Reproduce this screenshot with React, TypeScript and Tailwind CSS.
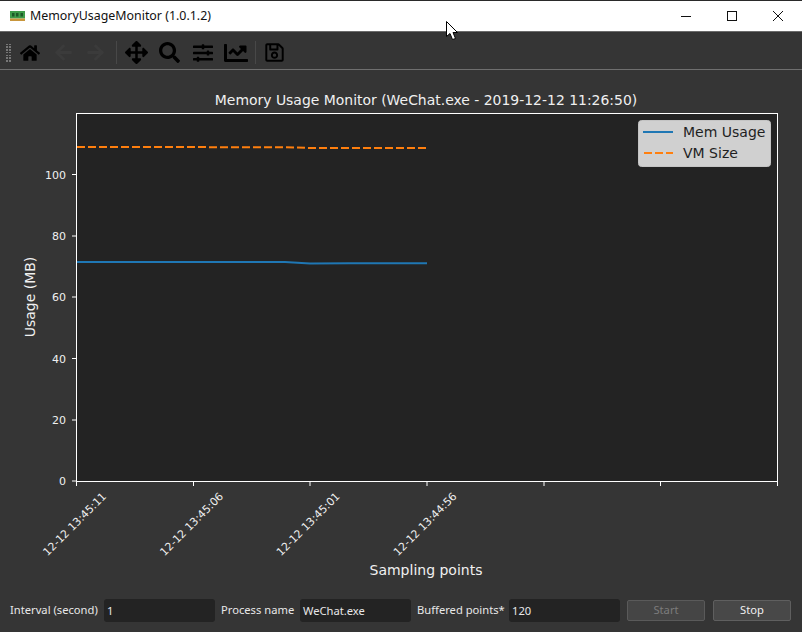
import React from 'react';
import { FaHome, FaArrowLeft, FaArrowRight, FaArrowsAlt, FaSearch, FaSlidersH, FaChartLine, FaRegSave } from 'react-icons/fa';

const yTicks = [
  { label: '0', y: 481 },
  { label: '20', y: 420 },
  { label: '40', y: 358.5 },
  { label: '60', y: 297 },
  { label: '80', y: 236 },
  { label: '100', y: 174.5 },
];

const xTicks = [
  { x: 76.5, label: '12-12 13:45:11' },
  { x: 193.5, label: '12-12 13:45:06' },
  { x: 310, label: '12-12 13:45:01' },
  { x: 427, label: '12-12 13:44:56' },
  { x: 544, label: '' },
  { x: 660.5, label: '' },
  { x: 777.5, label: '' },
];

const Chart = () => (
  <svg width="802" height="521" viewBox="0 70 802 521" className="block" style={{ fontFamily: '"DejaVu Sans", sans-serif' }}>
    <rect x="76.5" y="113.5" width="701" height="368" fill="#232323" stroke="#ffffff" strokeWidth="1" />
    {yTicks.map(t => (
      <g key={t.label}>
        <line x1="72" x2="76.5" y1={t.y} y2={t.y} stroke="#fff" />
        <text x="66" y={t.y + 4} textAnchor="end" fontSize="11" fill="#f0f0f0">{t.label}</text>
      </g>
    ))}
    {xTicks.map(t => (
      <g key={t.x}>
        <line x1={t.x} x2={t.x} y1="481" y2="486" stroke="#fff" />
        {t.label && (
          <text transform={`translate(${t.x + 30.5} 497) rotate(-45)`} textAnchor="end" fontSize="10.9" fill="#f0f0f0">{t.label}</text>
        )}
      </g>
    ))}
    <text x="426" y="105" textAnchor="middle" fontSize="13.95" fill="#f0f0f0">Memory Usage Monitor (WeChat.exe - 2019-12-12 11:26:50)</text>
    <text x="426" y="575" textAnchor="middle" fontSize="14" fill="#f0f0f0">Sampling points</text>
    <text transform="translate(35 297) rotate(-90)" textAnchor="middle" fontSize="14" fill="#f0f0f0">Usage (MB)</text>
    <polyline points="77,262 285,262 310,263.5 350,263.2 427,263.2" fill="none" stroke="#1f77b4" strokeWidth="2" />
    <polyline points="77,147 285,147.2 310,148 427,148" fill="none" stroke="#ff7f0e" strokeWidth="2" strokeDasharray="8 3" />
    <rect x="638.5" y="120.5" width="132" height="46" rx="3" fill="#d0d0d0" stroke="#c4c4c4" />
    <line x1="643" x2="673" y1="132" y2="132" stroke="#1f77b4" strokeWidth="2" />
    <line x1="644" x2="673" y1="153" y2="153" stroke="#ff7f0e" strokeWidth="2" strokeDasharray="8 3" />
    <text x="683" y="137" fontSize="14" fill="#1f1f1f">Mem Usage</text>
    <text x="683" y="158" fontSize="14" fill="#1f1f1f">VM Size</text>
  </svg>
);

const Field = ({ label, value, labelClass }: { label: string; value: string; labelClass: string }) => (
  <div className="flex items-center gap-[5px]">
    <span className={`text-[11.2px] text-[#e8e8e8] whitespace-nowrap ${labelClass}`}>{label}</span>
    <div className="w-[111px] h-[23px] rounded-[3px] bg-[#232323] pl-[3px] text-[11.2px] leading-[23px] text-[#e8e8e8]">{value}</div>
  </div>
);

export default function App() {
  return (
    <div className="relative w-[802px] h-[632px] overflow-hidden bg-[#353535] border-t border-[#2a2a2a]" style={{ fontFamily: '"Noto Sans", sans-serif' }}>
      <div className="h-[30px] bg-white flex items-center justify-between">
        <div className="flex items-center pl-[10px] gap-[5px] text-[12.4px] text-[#111]">
          <svg width="15" height="10" viewBox="0 0 15 10">
            <rect x="0" y="0" width="15" height="7.5" fill="#3f9b4a" />
            <rect x="2" y="2" width="2.5" height="3.5" fill="#1d5a28" />
            <rect x="6" y="2" width="2.5" height="3.5" fill="#1d5a28" />
            <rect x="10.5" y="2" width="2.5" height="3.5" fill="#1d5a28" />
            <rect x="0" y="7.5" width="15" height="2.5" fill="#c8963c" />
          </svg>
          <span>MemoryUsageMonitor (1.0.1.2)</span>
        </div>
        <div className="flex items-center text-[#111] mr-[1px]">
          <svg width="46" height="30" viewBox="0 0 46 30"><line x1="18" x2="28" y1="15.5" y2="15.5" stroke="#111" /></svg>
          <svg width="46" height="30" viewBox="0 0 46 30"><rect x="18.5" y="10.5" width="9" height="9" fill="none" stroke="#111" /></svg>
          <svg width="46" height="30" viewBox="0 0 46 30"><path d="M18 10 L28 20 M28 10 L18 20" stroke="#111" fill="none" /></svg>
        </div>
      </div>
      <div className="h-[39px] pt-[4px] border-t border-b border-t-[#6b6b6b] border-b-[#6f6f6f] flex items-center pl-[6px] text-black">
        <div className="w-[5px] h-[18px] mr-[9px] grid grid-cols-2 gap-[1px] content-between">
          {Array.from({ length: 14 }).map((_, i) => <span key={i} className="block w-[2px] h-[1.5px] bg-[#777]" />)}
        </div>
        <FaHome size={20} />
        <FaArrowLeft size={19} className="ml-[14px] text-[#3b3b3b]" />
        <FaArrowRight size={19} className="ml-[13px] text-[#3b3b3b]" />
        <span className="w-px h-[23px] bg-[#484848] ml-[11px] mr-[8px]" />
        <FaArrowsAlt size={23} />
        <FaSearch size={21} className="ml-[11px]" />
        <FaSlidersH size={20} className="ml-[13px]" />
        <FaChartLine size={24} className="ml-[11px]" />
        <span className="w-px h-[23px] bg-[#484848] ml-[7px] mr-[8px]" />
        <FaRegSave size={21} />
      </div>
      <Chart />
      <div className="flex items-center pl-[10px] pt-[8px] gap-[6px]">
        <Field label="Interval (second)" value="1" labelClass="w-[89px]" />
        <Field label="Process name" value="WeChat.exe" labelClass="w-[74px]" />
        <Field label="Buffered points*" value="120" labelClass="w-[87px]" />
        <button className="w-[78px] h-[21px] ml-[1px] rounded-[2px] border border-[#5a5a5a] bg-[#454545] text-[11.2px] text-[#7c7c7c]">Start</button>
        <button className="w-[78px] h-[21px] ml-[2px] rounded-[2px] border border-[#5f5f5f] bg-[#484848] text-[11.2px] text-[#f0f0f0]">Stop</button>
      </div>
      {/* mouse pointer caught in the screenshot */}
      <svg width="14" height="22" viewBox="0 0 14 22" className="absolute left-[446px] top-[20px]">
        <path d="M0.5 0.5 L0.5 15.5 L4 12.5 L6.5 18.5 L9.5 17.5 L7 11.5 L11.5 11.5 Z" fill="#fff" stroke="#000" strokeWidth="1" />
      </svg>
    </div>
  );
}
